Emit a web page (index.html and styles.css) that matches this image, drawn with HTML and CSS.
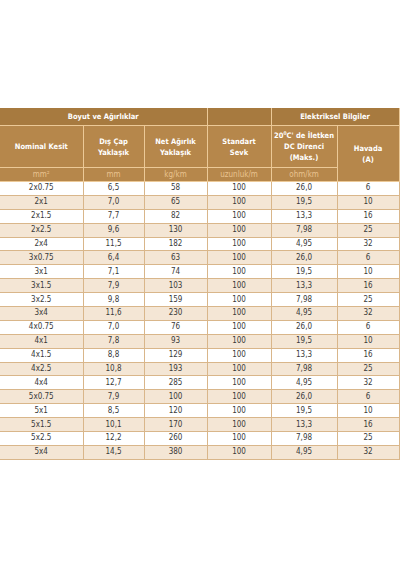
FILE: index.html
```html
<!DOCTYPE html>
<html lang="tr">
<head>
  <meta charset="UTF-8">
  <meta name="viewport" content="width=device-width, initial-scale=1.0">
  <title>Kablo Tablosu</title>
  <link rel="stylesheet" href="styles.css">
</head>
<body>
  <table class="spec-table">
    <colgroup>
      <col class="c1"><col class="c2"><col class="c3"><col class="c4"><col class="c5"><col class="c6">
    </colgroup>
    <thead>
      <tr class="group-row">
        <th colspan="3">Boyut ve Ağırlıklar</th>
        <th></th>
        <th colspan="2">Elektriksel Bilgiler</th>
      </tr>
      <tr class="title-row">
        <th>Nominal Kesit</th>
        <th>Dış Çap<br>Yaklaşık</th>
        <th>Net Ağırlık<br>Yaklaşık</th>
        <th>Standart<br>Sevk</th>
        <th>20<sup>0</sup>C' de İletken<br>DC Direnci<br>(Maks.)</th>
        <th rowspan="2">Havada<br>(A)</th>
      </tr>
      <tr class="unit-row">
        <td>mm²</td>
        <td>mm</td>
        <td>kg/km</td>
        <td>uzunluk/m</td>
        <td>ohm/km</td>
      </tr>
    </thead>
    <tbody>
      <tr><td>2x0.75</td><td>6,5</td><td>58</td><td>100</td><td>26,0</td><td>6</td></tr>
      <tr><td>2x1</td><td>7,0</td><td>65</td><td>100</td><td>19,5</td><td>10</td></tr>
      <tr><td>2x1.5</td><td>7,7</td><td>82</td><td>100</td><td>13,3</td><td>16</td></tr>
      <tr><td>2x2.5</td><td>9,6</td><td>130</td><td>100</td><td>7,98</td><td>25</td></tr>
      <tr><td>2x4</td><td>11,5</td><td>182</td><td>100</td><td>4,95</td><td>32</td></tr>
      <tr><td>3x0.75</td><td>6,4</td><td>63</td><td>100</td><td>26,0</td><td>6</td></tr>
      <tr><td>3x1</td><td>7,1</td><td>74</td><td>100</td><td>19,5</td><td>10</td></tr>
      <tr><td>3x1.5</td><td>7,9</td><td>103</td><td>100</td><td>13,3</td><td>16</td></tr>
      <tr><td>3x2.5</td><td>9,8</td><td>159</td><td>100</td><td>7,98</td><td>25</td></tr>
      <tr><td>3x4</td><td>11,6</td><td>230</td><td>100</td><td>4,95</td><td>32</td></tr>
      <tr><td>4x0.75</td><td>7,0</td><td>76</td><td>100</td><td>26,0</td><td>6</td></tr>
      <tr><td>4x1</td><td>7,8</td><td>93</td><td>100</td><td>19,5</td><td>10</td></tr>
      <tr><td>4x1.5</td><td>8,8</td><td>129</td><td>100</td><td>13,3</td><td>16</td></tr>
      <tr><td>4x2.5</td><td>10,8</td><td>193</td><td>100</td><td>7,98</td><td>25</td></tr>
      <tr><td>4x4</td><td>12,7</td><td>285</td><td>100</td><td>4,95</td><td>32</td></tr>
      <tr><td>5x0.75</td><td>7,9</td><td>100</td><td>100</td><td>26,0</td><td>6</td></tr>
      <tr><td>5x1</td><td>8,5</td><td>120</td><td>100</td><td>19,5</td><td>10</td></tr>
      <tr><td>5x1.5</td><td>10,1</td><td>170</td><td>100</td><td>13,3</td><td>16</td></tr>
      <tr><td>5x2.5</td><td>12,2</td><td>260</td><td>100</td><td>7,98</td><td>25</td></tr>
      <tr><td>5x4</td><td>14,5</td><td>380</td><td>100</td><td>4,95</td><td>32</td></tr>
    </tbody>
  </table>
</body>
</html>
```

FILE: styles.css
```css
body {
    background-color: #ffffff;
    font-family: 'DejaVu Sans Condensed', 'DejaVu Sans', sans-serif;
    margin: 0;
    padding-top: 108px;
}
.spec-table {
    border-collapse: collapse;
    table-layout: fixed;
    width: 399px;
    text-align: center;
}
.c1 { width: 83px; }
.c2 { width: 61px; }
.c3 { width: 63px; }
.c4 { width: 64px; }
.c5 { width: 66px; }
.c6 { width: 62px; }
th, td {
    padding: 0;
    text-align: center;
}
thead th, thead td {
    border: 1px solid #ecc997;
}
.group-row th {
    background-color: #a77a3f;
    color: #ffffff;
    font-size: 7.5px;
    font-weight: bold;
    height: 17px;
}
.title-row th {
    background-color: #b6874b;
    color: #ffffff;
    font-size: 7.5px;
    font-weight: bold;
    line-height: 11px;
    height: 41px;
    white-space: nowrap;
}
.title-row sup {
    font-size: 5px;
    line-height: 0;
    vertical-align: 3px;
}
.unit-row td {
    background-color: #b6874b;
    color: #e9c38f;
    font-size: 8px;
    height: 13px;
}
thead tr:first-child th {
    border-top: none;
}
tbody td {
    border: 1px solid #d9b68a;
    color: #3a3a3a;
    font-size: 8px;
    height: 12.9px;
    line-height: 12px;
}
tbody tr:nth-child(even) td {
    background-color: #f4e6d5;
}
.spec-table tr > :first-child {
    border-left: none;
}
```
